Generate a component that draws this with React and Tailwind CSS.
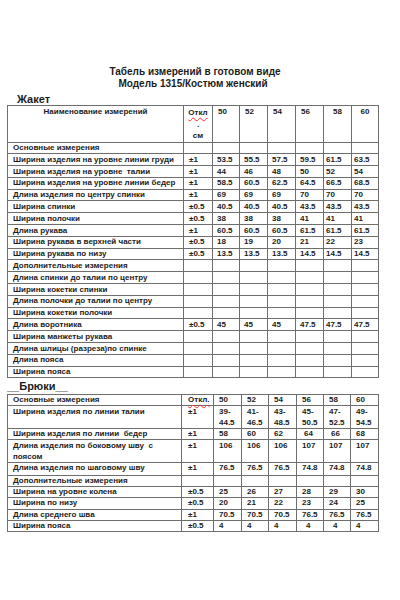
import React from 'react';

const jacketRows = [
    ['Основные измерения'],
    ['Ширина изделия на уровне линии груди', '±1', ['53.5', '55.5', '57.5', '59.5', '61.5', '63.5']],
    ['Ширина изделия на уровне  талии', '±1', ['44', '46', '48', '50', '52', '54']],
    ['Ширина изделия на уровне линии бедер', '±1', ['58.5', '60.5', '62.5', '64.5', '66.5', '68.5']],
    ['Длина изделия по центру спинки', '±1', ['69', '69', '69', '70', '70', '70']],
    ['Ширина спинки', '±0.5', ['40.5', '40.5', '40.5', '43.5', '43.5', '43.5']],
    ['Ширина полочки', '±0.5', ['38', '38', '38', '41', '41', '41']],
    ['Длина рукава', '±1', ['60.5', '60.5', '60.5', '61.5', '61.5', '61.5']],
    ['Ширина рукава в верхней части', '±0.5', ['18', '19', '20', '21', '22', '23']],
    ['Ширина рукава по низу', '±0.5', ['13.5', '13.5', '13.5', '14.5', '14.5', '14.5']],
    ['Дополнительные измерения'],
    ['Длина спинки до талии по центру'],
    ['Ширина кокетки спинки'],
    ['Длина полочки до талии по центру'],
    ['Ширина кокетки полочки'],
    ['Длина воротника', '±0.5', ['45', '45', '45', '47.5', '47.5', '47.5']],
    ['Ширина манжеты рукава'],
    ['Длина шлицы (разреза)по спинке'],
    ['Длина пояса'],
    ['Ширина пояса'],
];

// [name, tolerance, values, row height class, per-column padding]
const trouserRows = [
    ['Ширина изделия по линии талии', '±1', ['39-\n44.5', '41-\n46.5', '43-\n48.5', '45-\n50.5', '47-\n52.5', '49-\n54.5'], 'h-[23px] leading-[11px]'],
    ['Ширина изделия по линии  бедер', '±1', ['58', '60', '62', '64', '66', '68'], 'h-[11px]', [0, 0, 0, 1, 1, 0]],
    ['Длина изделия по боковому шву  с\nпоясом', '±1', ['106', '106', '106', '107', '107', '107'], 'h-[22px] leading-[11px]'],
    ['Длина изделия по шаговому шву', '±1', ['76.5', '76.5', '76.5', '74.8', '74.8', '74.8'], 'h-[13px]'],
    ['Дополнительные измерения', '', [], 'h-[11px]'],
    ['Ширина на уровне колена', '±0.5', ['25', '26', '27', '28', '29', '30'], 'h-[11px]'],
    ['Ширина по низу', '±0.5', ['20', '21', '22', '23', '24', '25'], 'h-[11.5px]'],
    ['Длина среднего шва', '±1', ['70.5', '70.5', '70.5', '76.5', '76.5', '76.5'], 'h-[11px]'],
    ['Ширина пояса', '±0.5', ['4', '4', '4', '4', '4', '4'], 'h-[11px]', [0, 0, 0, 2, 2, 0]],
];

const sizes = ['50', '52', '54', '56', '58', '60'];
const cell = 'border border-[#6e6e6e] p-0 align-top whitespace-pre';
const jacketPad = ['pl-[4px]', 'pl-[4px]', 'pl-[4px]', 'pl-[4px]', 'pl-[2px]', 'pl-[2px]'];
const extraPad = ['pl-[5px]', 'pl-[7px]', 'pl-[9px]'];

const Jacket = () => (
    <table className="table-fixed border-collapse border border-[#555] w-[371px] ml-[7px]">
        <colgroup>
            <col className="w-[176px]" />
            <col className="w-[29px]" />
            <col className="w-[27px]" />
            <col className="w-[28px]" />
            <col className="w-[28px]" />
            <col className="w-[28px]" />
            <col className="w-[28px]" />
            <col className="w-[27px]" />
        </colgroup>
        <thead>
            <tr className="h-[36px]">
                <td className={`${cell} text-center pt-[1px]`}>Наименование измерений</td>
                <td className={`${cell} text-center pt-[1px] leading-[11.5px]`}>
                    <span className="underline decoration-wavy decoration-red-500 decoration-[0.5px] underline-offset-2">Откл</span>
                    <br />.<br />см
                </td>
                {sizes.map((s, i) => (
                    <td key={s} className={`${cell} pt-[1px] ${i < 4 ? 'pl-[5px]' : 'text-center'}`}>{s}</td>
                ))}
            </tr>
        </thead>
        <tbody>
            {jacketRows.map(([name, tol = '', vals = []]) => (
                <tr key={name} className="h-[11.8px]">
                    <td className={`${cell} pl-[5px] pt-[0.5px]`}>{name}</td>
                    <td className={`${cell} pl-[5px] pt-[0.5px]`}>{tol}</td>
                    {sizes.map((s, i) => (
                        <td key={s} className={`${cell} pt-[0.5px] ${jacketPad[i]}`}>{vals[i] || ''}</td>
                    ))}
                </tr>
            ))}
        </tbody>
    </table>
);

const Trousers = () => (
    <table className="table-fixed border-collapse border border-[#555] w-[371px] ml-[7px]">
        <colgroup>
            <col className="w-[174px]" />
            <col className="w-[32px]" />
            <col className="w-[28px]" />
            <col className="w-[27px]" />
            <col className="w-[28px]" />
            <col className="w-[27px]" />
            <col className="w-[27px]" />
            <col className="w-[28px]" />
        </colgroup>
        <tbody>
            <tr className="h-[11px]">
                <td className={`${cell} pl-[5px]`}>Основные измерения</td>
                <td className={`${cell} pl-[6px]`}>
                    <span className="underline decoration-wavy decoration-red-500 decoration-[0.5px] underline-offset-2">Откл.</span>
                </td>
                {sizes.map((s) => (
                    <td key={s} className={`${cell} pl-[5px]`}>{s}</td>
                ))}
            </tr>
            {trouserRows.map(([name, tol, vals, h, pads = []]) => (
                <tr key={name} className={h}>
                    <td className={`${cell} pl-[5px]`}>{name}</td>
                    <td className={`${cell} pl-[6px]`}>{tol}</td>
                    {sizes.map((s, i) => (
                        <td key={s} className={`${cell} ${extraPad[pads[i] || 0]}`}>{vals[i] || ''}</td>
                    ))}
                </tr>
            ))}
        </tbody>
    </table>
);

const App = () => {
    return (
        <div className="w-[400px] h-[600px] bg-white text-[#1c1c1c] font-['Liberation_Sans',sans-serif] overflow-hidden">
            <div className="pt-[66px] flex flex-col items-center font-bold text-[10px] leading-[12px]">
                <p className="ml-[-10px]">Табель измерений в готовом виде</p>
                <p className="ml-[-14px]">Модель 1315/Костюм женский</p>
            </div>
            <h2 className="ml-[17px] mt-[3px] text-[11px] leading-[12px] font-bold">Жакет</h2>
            <div className="text-[8px] leading-[10px] font-bold">
                <Jacket />
            </div>
            <h2 className="ml-[7px] mt-[1px] text-[11px] leading-[15px] font-bold">__Брюки__</h2>
            <div className="text-[8px] leading-[10px] font-bold">
                <Trousers />
            </div>
        </div>
    );
};

export default App;
